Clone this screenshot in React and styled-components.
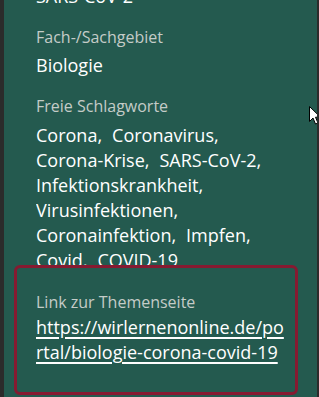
import React from "react";
import styled, { createGlobalStyle } from "styled-components";

const GlobalStyle = createGlobalStyle`
  html, body {
    margin: 0;
    padding: 0;
    background: #2b2b2b;
  }
  body {
    font-family: "Open Sans", "Liberation Sans", sans-serif;
  }
`;

const keywords = [
  "Corona",
  "Coronavirus",
  "Corona-Krise",
  "SARS-CoV-2",
  "Infektionskrankheit",
  "Virusinfektionen",
  "Coronainfektion",
  "Impfen",
  "Covid",
  "COVID-19",
];

export default function App() {
  return (
    <>
      <GlobalStyle />
      <Panel>
        <Section $first>
          <Value>SARS-CoV-2</Value>
        </Section>
        <Section>
          <Label>Fach-/Sachgebiet</Label>
          <Value>Biologie</Value>
        </Section>
        <Section>
          <Label>Freie Schlagworte</Label>
          <KeywordList>
            {keywords.map((word, i) => (
              <Keyword key={word}>
                {word}
                {i < keywords.length - 1 ? "," : ""}
              </Keyword>
            ))}
          </KeywordList>
        </Section>
        <Section $active>
          <Label>Link zur Themenseite</Label>
          <TopicLink href="#">
            https://wirlernenonline.de/portal/biologie-corona-covid-19
          </TopicLink>
        </Section>
        <Cursor viewBox="0 0 12 19" width="12" height="19">
          <path
            d="M0.5 0.5 L0.5 15.5 L4 12 L6.5 18 L9 17 L6.5 11.2 L11.5 11.2 Z"
            fill="#ffffff"
            stroke="#000000"
            strokeWidth="1"
          />
        </Cursor>
      </Panel>
    </>
  );
}

const Panel = styled.div`
  position: relative;
  margin: 0 2px 0 4px;
  height: 397px;
  overflow: hidden;
  background: #245a4f;
  padding-left: 10px;
  display: flex;
  flex-direction: column;
`;

const Section = styled.section`
  flex: none;
  width: 284px;
  box-sizing: border-box;
  border: 3px solid ${(p) => (p.$active ? "#861a31" : "transparent")};
  border-radius: 6px;
  padding: ${(p) => (p.$active ? "23.8px 6px 26.5px 19px" : "0 6px 0 19px")};
  margin-top: ${(p) => (p.$first ? "-19.5px" : p.$active ? "-3px" : "12px")};
`;

const Label = styled.div`
  font-size: 16px;
  line-height: 20px;
  color: #c4ccc8;
  margin-bottom: 6.7px;
`;

const Value = styled.div`
  font-size: 18px;
  line-height: 25px;
  color: #ffffff;
`;

const KeywordList = styled.div`
  display: flex;
  flex-wrap: wrap;
  column-gap: 10px;
  max-height: 142px;
  overflow: hidden;
  font-size: 18px;
  line-height: 25px;
  color: #ffffff;
`;

const Keyword = styled.span``;

const TopicLink = styled.a`
  display: block;
  margin-top: -3px;
  font-size: 18px;
  line-height: 25px;
  color: #ffffff;
  text-decoration: underline;
  text-decoration-thickness: 1.5px;
  text-underline-offset: 3px;
  word-break: break-all;
`;

const Cursor = styled.svg`
  position: absolute;
  left: 305px;
  top: 106px;
`;
